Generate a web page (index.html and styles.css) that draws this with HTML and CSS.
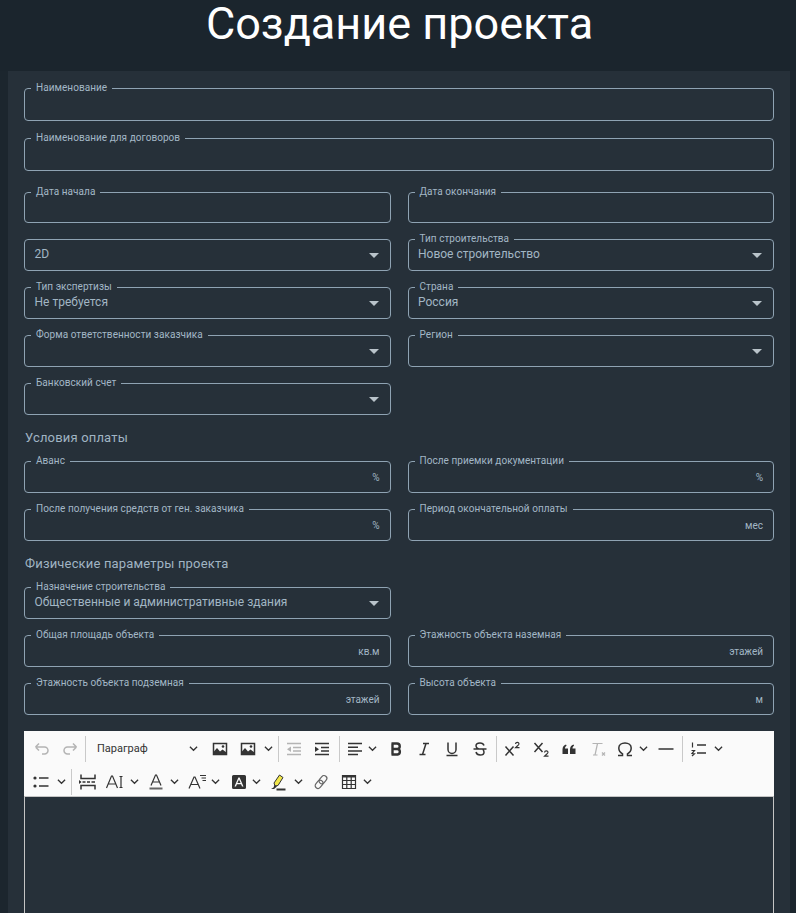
FILE: index.html
```html
<!DOCTYPE html>
<html lang="ru">
<head>
<meta charset="utf-8">
<title>Создание проекта</title>
<link rel="stylesheet" href="styles.css">
</head>
<body>
<header class="page-head"><h1>Создание проекта</h1></header>
<main class="panel">
  <fieldset class="field wide r50"><legend>Наименование</legend></fieldset>
  <fieldset class="field wide r54"><legend>Наименование для договоров</legend></fieldset>

  <div class="row r47 date">
    <fieldset class="field"><legend>Дата начала</legend></fieldset>
    <fieldset class="field"><legend>Дата окончания</legend></fieldset>
  </div>
  <div class="row r48">
    <fieldset class="field select bare"><span class="value">2D</span><i class="caret"></i></fieldset>
    <fieldset class="field select"><legend>Тип строительства</legend><span class="value">Новое строительство</span><i class="caret"></i></fieldset>
  </div>
  <div class="row r48">
    <fieldset class="field select"><legend>Тип экспертизы</legend><span class="value">Не требуется</span><i class="caret"></i></fieldset>
    <fieldset class="field select"><legend>Страна</legend><span class="value">Россия</span><i class="caret"></i></fieldset>
  </div>
  <div class="row r48">
    <fieldset class="field select"><legend>Форма ответственности заказчика</legend><i class="caret"></i></fieldset>
    <fieldset class="field select"><legend>Регион</legend><i class="caret"></i></fieldset>
  </div>
  <div class="row">
    <fieldset class="field select"><legend>Банковский счет</legend><i class="caret"></i></fieldset>
  </div>

  <h2 class="section first">Условия оплаты</h2>
  <div class="row r48">
    <fieldset class="field"><legend>Аванс</legend><span class="suffix">%</span></fieldset>
    <fieldset class="field"><legend>После приемки документации</legend><span class="suffix">%</span></fieldset>
  </div>
  <div class="row">
    <fieldset class="field"><legend>После получения средств от ген. заказчика</legend><span class="suffix">%</span></fieldset>
    <fieldset class="field"><legend>Период окончательной оплаты</legend><span class="suffix">мес</span></fieldset>
  </div>

  <h2 class="section second">Физические параметры проекта</h2>
  <div class="row r48">
    <fieldset class="field select"><legend>Назначение строительства</legend><span class="value">Общественные и административные здания</span><i class="caret"></i></fieldset>
  </div>
  <div class="row r48">
    <fieldset class="field"><legend>Общая площадь объекта</legend><span class="suffix">кв.м</span></fieldset>
    <fieldset class="field"><legend>Этажность объекта наземная</legend><span class="suffix">этажей</span></fieldset>
  </div>
  <div class="row r48">
    <fieldset class="field"><legend>Этажность объекта подземная</legend><span class="suffix">этажей</span></fieldset>
    <fieldset class="field"><legend>Высота объекта</legend><span class="suffix">м</span></fieldset>
  </div>

  <section class="editor">
    <div class="toolbar">
      <div class="tb-row">
        <button class="tb off"><svg viewBox="0 0 20 20"><path class="s" d="M3.500 8 7 4.500M3.500 8 7 11.500M3.500 8H12.500a3.500 3.500 0 0 1 0 7H10"/></svg></button>
        <button class="tb off"><svg viewBox="0 0 20 20"><path class="s" d="M16.500 8 13 4.500M16.500 8 13 11.500M16.500 8H7.500a3.500 3.500 0 0 0 0 7H10"/></svg></button>
        <span class="sep"></span>
        <button class="tb para"><span>Параграф</span><svg class="chev" viewBox="0 0 10 10"><path d="M1 3 5 7 9 3"/></svg></button>
        <button class="tb"><svg viewBox="0 0 20 20"><path class="s" d="M3.500 4.500h13v11h-13z"/><path class="f" d="M3.500 15.500v-2.500l3.500-4 3 3.500 2.500-2 4 3v2z"/><circle class="f" cx="13" cy="7.500" r="1.300"/></svg></button>
        <button class="tb d d-img"><svg viewBox="0 0 20 20"><path class="s" d="M3.500 4.500h13v11h-13z"/><path class="f" d="M3.500 15.500v-2.500l3.500-4 3 3.500 2.500-2 4 3v2z"/><circle class="f" cx="13" cy="7.500" r="1.300"/></svg><svg class="chev" viewBox="0 0 10 10"><path d="M1 3 5 7 9 3"/></svg></button>
        <span class="sep"></span>
        <button class="tb off"><svg viewBox="0 0 20 20"><path class="s" d="M3 4.500h14M9 8.500h8M9 12h8M3 15.500h14"/><path class="f" d="M7 7.500v5.500l-4-2.750z"/></svg></button>
        <button class="tb"><svg viewBox="0 0 20 20"><path class="s" d="M3 4.500h14M9 8.500h8M9 12h8M3 15.500h14"/><path class="f" d="M3 7.500v5.500l4-2.750z"/></svg></button>
        <span class="sep sep-b"></span>
        <button class="tb d d-align"><svg viewBox="0 0 20 20"><path class="s" d="M3 4.500h14M3 8.200h10M3 11.900h14M3 15.600h10"/></svg><svg class="chev" viewBox="0 0 10 10"><path d="M1 3 5 7 9 3"/></svg></button>
        <button class="tb"><svg viewBox="0 0 20 20"><path class="s thick" d="M6.500 4.500V15.500M5.500 4.500H11a2.700 2.700 0 0 1 0 5.500H6.500M11 10h.6a2.800 2.800 0 0 1 0 5.500H5.500"/></svg></button>
        <button class="tb"><svg viewBox="0 0 20 20"><path class="s" d="M9 4.500h6M5.500 15.500h6M12 4.500 8.500 15.500"/></svg></button>
        <button class="tb"><svg viewBox="0 0 20 20"><path class="s" d="M6 3.500v7a4 4 0 0 0 8 0V3.500M4.500 16.500h11"/></svg></button>
        <button class="tb"><svg viewBox="0 0 20 20"><path class="s" d="M3.500 10h13M14 6.500c-.5-1.600-2.200-2.500-4-2.500-2.300 0-4 1.100-4 2.900 0 1.300.9 2.300 2.700 3.100M6 13c.4 1.900 2.200 3 4.200 3 2.100 0 3.800-1.100 3.800-2.800 0-1-.4-1.700-1.200-3.200"/></svg></button>
        <span class="sep sep-c"></span>
        <button class="tb"><svg viewBox="0 0 20 20"><path class="s" d="M3.500 7.500l8 9M11.500 7.500l-8 9"/><path class="s thin" d="M13.500 5c.3-2.200 3.800-2 3.400.2-.3 1-2.400 2.300-3.400 3.500h4"/></svg></button>
        <button class="tb gap"><svg viewBox="0 0 20 20"><path class="s" d="M3.500 4l8 9M11.500 4l-8 9"/><path class="s thin" d="M13.500 13.500c.3-2.200 3.800-2 3.400.2-.3 1-2.400 2.300-3.400 3.500h4"/></svg></button>
        <button class="tb"><svg viewBox="0 0 20 20"><path class="f" d="M3.500 15v-4.500c0-2.800 1.300-4.200 3.500-5l.6 1.300C6.500 7.500 6 8.200 6 9.500h3V15zM11 15v-4.500c0-2.800 1.300-4.200 3.500-5l.6 1.300C14 7.500 13.500 8.200 13.500 9.500h3V15z"/></svg></button>
        <button class="tb off gap"><svg viewBox="0 0 20 20"><path class="s thin" d="M4.500 4.500h10M9.500 4.500 7 16M5 16h4.500M14 13.500l3 3M17 13.500l-3 3"/></svg></button>
        <button class="tb d d-omega"><svg viewBox="0 0 20 20"><path class="s" d="M3 16.500H7.500V14.800C5.300 13.500 3.800 11.500 3.800 9 3.800 6 6.500 4 10 4S16.200 6 16.200 9C16.200 11.500 14.700 13.500 12.500 14.800V16.500H17"/></svg><svg class="chev" viewBox="0 0 10 10"><path d="M1 3 5 7 9 3"/></svg></button>
        <button class="tb"><svg viewBox="0 0 20 20"><path class="s" d="M2.500 10h15"/></svg></button>
        <span class="sep sep-c"></span>
        <button class="tb d d-num"><svg viewBox="0 0 20 20"><path class="s" d="M8 6h9M8 14h9"/><path class="s thin" d="M3.500 3.500v5M2.500 11.500h3L3 14.500l2.500.2L3 17"/></svg><svg class="chev" viewBox="0 0 10 10"><path d="M1 3 5 7 9 3"/></svg></button>
      </div>
      <div class="tb-row">
        <button class="tb d d-list"><svg viewBox="0 0 20 20"><path class="s" d="M8 6h9.500M8 14h9.500"/><circle class="f" cx="4" cy="6" r="1.600"/><circle class="f" cx="4" cy="14" r="1.600"/></svg><svg class="chev" viewBox="0 0 10 10"><path d="M1 3 5 7 9 3"/></svg></button>
        <span class="sep sep-d"></span>
        <button class="tb"><svg viewBox="0 0 20 20"><path class="s" d="M3 2.500v4h14v-4M3 17.500v-4h14v4M4.500 10h3M9 10h3M13.500 10h3.500M1 10h1.500"/><path class="f" d="M1 8l2.500 2L1 12z"/></svg></button>
        <button class="tb d d-size"><svg viewBox="0 0 20 20"><path class="s thin" d="M1.500 16 6.500 4h1l5 12M3.300 12h7.400M16 4.500v11M14.500 4.500h3M14.500 15.500h3"/></svg><svg class="chev" viewBox="0 0 10 10"><path d="M1 3 5 7 9 3"/></svg></button>
        <button class="tb d d-color"><svg viewBox="0 0 20 20"><path class="s thin" d="M5 13.500 9.500 3h1L15 13.500M6.500 10h7"/><path class="s heavy grey" d="M3.500 16.500h13"/></svg><svg class="chev" viewBox="0 0 10 10"><path d="M1 3 5 7 9 3"/></svg></button>
        <button class="tb d d-family"><svg viewBox="0 0 20 20"><path class="s thin" d="M2 16.500 7 5h1l5 11.500M3.800 12.500h7.500M13 3.500h6M14.500 6h4.500M15.500 8.500h3.500"/></svg><svg class="chev" viewBox="0 0 10 10"><path d="M1 3 5 7 9 3"/></svg></button>
        <button class="tb d d-bg"><svg viewBox="0 0 20 20"><path class="f" fill-rule="evenodd" d="M4.500 3h11A1.500 1.500 0 0 1 17 4.500v11a1.500 1.500 0 0 1-1.500 1.500h-11A1.500 1.500 0 0 1 3 15.500v-11A1.500 1.500 0 0 1 4.500 3zM9.400 5.500 5.500 14.500h1.500l.9-2.300h4.200l.9 2.300h1.500L10.600 5.500zM10 7.500l1.600 3.500H8.400z"/></svg><svg class="chev" viewBox="0 0 10 10"><path d="M1 3 5 7 9 3"/></svg></button>
        <button class="tb d d-mark"><svg viewBox="0 0 20 20"><path class="mark" d="M6 11 11.500 3l3.500 2.500L10 13.500l-3 .5z"/><path class="f" d="M6.500 13 5.500 15.500 3 17h3l3-2.500z"/><path class="s heavy" d="M8.500 17.500h9"/></svg><svg class="chev" viewBox="0 0 10 10"><path d="M1 3 5 7 9 3"/></svg></button>
        <button class="tb"><svg viewBox="0 0 20 20"><g transform="rotate(40 10 10)"><rect class="s thin grey" x="7.200" y="2.500" width="5.600" height="9" rx="2.800"/><rect class="s thin grey" x="7.200" y="8.500" width="5.600" height="9" rx="2.800"/></g></svg></button>
        <button class="tb d d-table"><svg viewBox="0 0 20 20"><path class="s thin" d="M3.500 3.500h13v13h-13zM3.500 8.500h13M3.500 12.500h13M7.800 5v11.500M12.200 5v11.500"/><path class="f" d="M3 3h14v2.500H3z"/></svg><svg class="chev" viewBox="0 0 10 10"><path d="M1 3 5 7 9 3"/></svg></button>
      </div>
    </div>
    <div class="content"></div>
  </section>
</main>
</body>
</html>
```
FILE: styles.css
```css
* { box-sizing: border-box; }
html, body { height: 100%; overflow: hidden; }
body {
  margin: 0;
  background: #1c262e;
  font-family: Roboto, "Liberation Sans", sans-serif;
  color: #a9bdcb;
}
.page-head { height: 71px; padding: 2px 0 0 3px; background: #1b252d; text-align: center; }
.page-head h1 {
  margin: 0;
  font-size: 45px;
  line-height: 44px;
  font-weight: 400;
  color: #fff;
}
.panel {
  height: 842px;
  margin: 0 6px 0 8px;
  padding: 12px 16px 0;
  background: #263039;
  overflow: hidden;
}
.row {
  display: grid;
  grid-template-columns: 1fr 1fr;
  column-gap: 17px;
}
.field {
  position: relative;
  display: block;
  min-width: 0;
  margin: 0;
  padding: 0 9.500px;
  height: 37px;
  border: 1px solid #8fa3b3;
  border-radius: 4px;
}
.field.wide { height: 38px; }
.field legend {
  margin-left: -3.500px;
  padding: 0 5px;
  font-size: 10px;
  line-height: 10px;
  letter-spacing: .05px;
  color: #a3b7c6;
}
.r50 { margin-bottom: 12px; }
.r54 { margin-bottom: 16px; }
.r47 { margin-bottom: 11px; }
.r48 { margin-bottom: 11px; }
.date .field { height: 36px; }
.bare { height: 32px; margin-top: 5px; }
.value {
  display: block;
  font-size: 12px;
  line-height: 14px;
  margin-top: 3px;
  color: #a2b6c4;
}
.bare .value { margin-top: 7px; }
.caret {
  position: absolute;
  right: 11px;
  bottom: 12px;
  width: 0;
  height: 0;
  border-left: 5px solid transparent;
  border-right: 5px solid transparent;
  border-top: 5px solid #b9c3ca;
}
.suffix {
  position: absolute;
  right: 10px;
  bottom: 8px;
  font-size: 10px;
  line-height: 12px;
  color: #a2b6c4;
}
.section {
  margin: 0;
  font-size: 13px;
  line-height: 16px;
  font-weight: 400;
  letter-spacing: .17px;
  color: #a0b4c3;
}
.section.first { padding: 15px 0 10px 1px; }
.section.second { padding: 15px 0 10px 1px; }
.editor { margin-top: 16px; }
.toolbar {
  height: 66px;
  padding-top: 1px;
  background: #fafafa;
  border-bottom: 1px solid #c4c4c4;
}
.tb-row { display: flex; align-items: center; height: 33px; padding-left: 4px; }
.tb {
  display: flex;
  align-items: center;
  justify-content: center;
  flex: none;
  width: 28px;
  height: 30px;
  padding: 0;
  border: 0;
  background: none;
  color: #333;
}
.tb svg { width: 20px; height: 20px; flex: none; }
.tb svg.chev { width: 9px; height: 9px; }
.tb.gap { margin-left: 1px; }
.tb.off { opacity: .35; }
.d { justify-content: flex-start; }
.d-img { width: 43px; padding-left: 4px; }
.d-img .chev { margin-left: 5.5px; }
.d-align { width: 41px; padding-left: 4px; }
.d-align .chev { margin-left: 2.5px; }
.d-omega { width: 40px; padding-left: 3px; }
.d-omega .chev { margin-left: 3.5px; }
.d-num { width: 40px; padding-left: 5px; }
.d-num .chev { margin-left: 4.5px; }
.d-list { width: 43px; padding-left: 2.5px; }
.d-list .chev { margin-left: 6px; }
.d-size { width: 38px; padding-left: 3px; }
.d-size .chev { margin-left: 4.5px; }
.d-color { width: 40px; padding-left: 6px; }
.d-color .chev { margin-left: 3.5px; }
.d-family { width: 40px; padding-left: 7px; }
.d-family .chev { margin-left: 4px; }
.d-bg { width: 40px; padding-left: 8.5px; }
.d-bg .chev { margin-left: 3px; }
.d-mark { width: 47px; padding-left: 8px; }
.d-mark .chev { margin-left: 5.5px; }
.d-table { width: 40px; padding-left: 4px; }
.d-table .chev { margin-left: 3.5px; }
.tb.para {
  width: 119px;
  justify-content: space-between;
  padding: 0 8px 0 10px;
  font: 11px Roboto, sans-serif;
  color: #333;
}
.s { fill: none; stroke: #333; stroke-width: 1.5; }
.s.thick { stroke-width: 2.4; }
.s.thin { stroke-width: 1.2; }
.s.heavy { stroke-width: 2; }
.s.grey { stroke: #666; }
.f { fill: #333; }
.mark { fill: #f2e74a; stroke: #333; stroke-width: 1; }
.chev path { fill: none; stroke: #333; stroke-width: 1.4; }
.sep { flex: none; width: 1px; height: 26px; margin: 0 1px; background: #c9c9c9; }
.sep-b { margin-left: 3px; }
.sep-c { margin-left: 2px; }
.sep-d { margin: 0 2px 0 0; }
.content {
  height: 116px;
  background: #263039;
  border: 1px solid #c4c4c4;
  border-width: 0 1px;
}
```
